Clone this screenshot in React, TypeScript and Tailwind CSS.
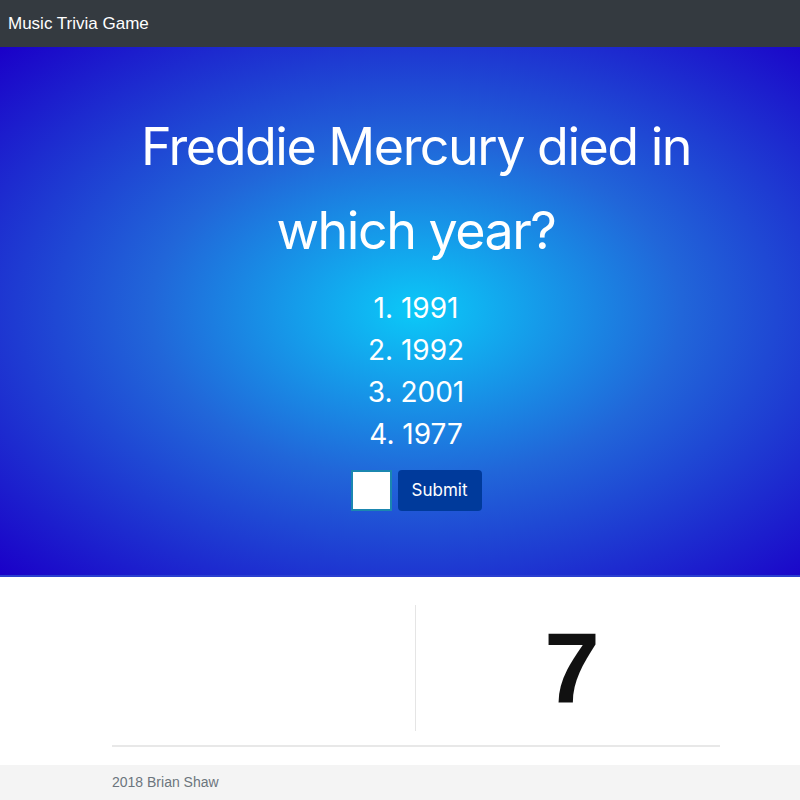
export default function App() {
  return (
    <div className="min-h-[800px] bg-white" style={{ fontFamily: "Inter, 'Noto Sans', sans-serif" }}>
      <nav className="h-[47px] bg-[#343a40] flex items-center px-[8px]">
        <span className="text-white text-[17px] leading-none" style={{ fontFamily: "'Liberation Sans', Arial, sans-serif" }}>Music Trivia Game</span>
      </nav>
      <section className="h-[530px] pl-[32px] flex flex-col items-center bg-[radial-gradient(ellipse_at_52%_50%,#0bc9f8_0%,#2166d9_45%,#1a00c8_100%)] border-b-[2px] border-[#2a3fd0]">
        <h1 className="mt-[58px] text-center text-white text-[52px] leading-[84px] font-normal tracking-[-1.5px]">
          Freddie Mercury died in<br />which year?
        </h1>
        <ol className="mt-[14px] flex flex-col items-center text-white text-[28px] leading-[42px]">
          <li>1. 1991</li>
          <li>2. 1992</li>
          <li>3. 2001</li>
          <li>4. 1977</li>
        </ol>
        <div className="mt-[15px] flex gap-[6px]">
          <input className="w-[41px] h-[41px] bg-white border-[2px] border-[#1b87b0] outline-none" />
          <button className="w-[84px] h-[41px] rounded-[4px] bg-[#003a9b] text-white text-[17px]">Submit</button>
        </div>
      </section>
      <div className="w-[608px] ml-[112px]">
        <div className="pt-[28px] grid grid-cols-2">
          <div className="h-[126px] border-r border-[#e5e5e5]"></div>
          <div className="h-[126px] flex items-center justify-center pl-[8px]">
            <span className="text-[#111] text-[100px] leading-none font-bold" style={{ fontFamily: "'Liberation Sans', Arial, sans-serif" }}>7</span>
          </div>
        </div>
        <hr className="mt-[14px] border-t-[2px] border-[#e8e8e8]" />
      </div>
      <footer className="mt-[18px] h-[35px] bg-[#f4f4f4] flex items-center">
        <div className="ml-[112px] text-[#6c757d] text-[14px]" style={{ fontFamily: "'Liberation Sans', Arial, sans-serif" }}>2018 Brian Shaw</div>
      </footer>
    </div>
  );
}
